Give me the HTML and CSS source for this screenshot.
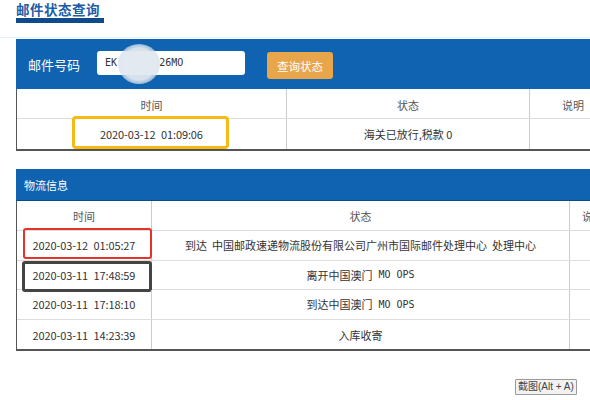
FILE: index.html
```html
<!DOCTYPE html>
<html lang="zh-CN">
<head>
<meta charset="utf-8">
<title>邮件状态查询</title>
<link rel="stylesheet" href="styles.css">
</head>
<body>
<div class="page">
  <div class="title-wrap">
    <h1 class="title">邮件状态查询</h1>
    <div class="title-bar"></div>
  </div>

  <section class="panel panel-query">
    <div class="query-bar">
      <span class="query-label">邮件号码</span>
      <div class="query-input"><span>EK</span><span class="masked">1234567</span><span>26MO</span><span class="blur"></span></div>
      <button class="query-btn" type="button">查询状态</button>
    </div>
    <div class="table t1">
      <div class="row head">
        <div class="cell">时间</div>
        <div class="cell">状态</div>
        <div class="cell">说明</div>
      </div>
      <div class="row last">
        <div class="cell mono">2020-03-12 01:09:06<span class="mark mark-yellow"></span></div>
        <div class="cell">海关已放行,税款 0</div>
        <div class="cell"></div>
      </div>
    </div>
  </section>

  <section class="panel panel-track">
    <div class="track-head">物流信息</div>
    <div class="table t2">
      <div class="row head">
        <div class="cell">时间</div>
        <div class="cell">状态</div>
        <div class="cell">说明</div>
      </div>
      <div class="row">
        <div class="cell mono">2020-03-12 01:05:27<span class="mark mark-red"></span></div>
        <div class="cell">到达&nbsp; 中国邮政速递物流股份有限公司广州市国际邮件处理中心&nbsp; 处理中心</div>
        <div class="cell"></div>
      </div>
      <div class="row">
        <div class="cell mono">2020-03-11 17:48:59<span class="mark mark-dark"></span></div>
        <div class="cell">离开中国澳门<span class="code">MO OPS</span></div>
        <div class="cell"></div>
      </div>
      <div class="row">
        <div class="cell mono">2020-03-11 17:18:10</div>
        <div class="cell">到达中国澳门<span class="code">MO OPS</span></div>
        <div class="cell"></div>
      </div>
      <div class="row last">
        <div class="cell mono">2020-03-11 14:23:39</div>
        <div class="cell">入库收寄</div>
        <div class="cell"></div>
      </div>
    </div>
  </section>

  <div class="shot-row">
    <button class="shot-btn" type="button">截图(Alt + A)</button>
  </div>
</div>
</body>
</html>
```

FILE: styles.css
```css
html, body {
  margin: 0;
  padding: 0;
  background: #fff;
  overflow: hidden;
}
body {
  font-family: "Noto Sans CJK SC", "Noto Sans", sans-serif;
  color: #333;
  width: 590px;
  height: 400px;
}
.page {
  display: flex;
  flex-direction: column;
  width: 620px;
}
.title-wrap {
  padding: 1px 0 0 16px;
  height: 38px;
  box-sizing: border-box;
  border-bottom: 1px solid #e8f3f9;
}
.title {
  margin: 0;
  font-size: 13.5px;
  line-height: 17px;
  font-weight: bold;
  color: #1d5ca6;
  letter-spacing: 0.5px;
}
.title-bar {
  width: 88px;
  height: 5px;
  background: #0e4a8c;
}
.panel {
  margin: 1px 0 0 16px;
  width: 600px;
}
.query-bar {
  height: 50px;
  background: #0f63b0;
  display: flex;
  align-items: center;
  padding-left: 12px;
}
.query-label {
  color: #fff;
  font-size: 13px;
  width: 69px;
}
.query-input {
  position: relative;
  width: 148px;
  height: 24px;
  box-sizing: border-box;
  background: #fff;
  border-radius: 3px;
  padding-left: 8px;
  font-family: "DejaVu Sans Mono", monospace;
  font-size: 10px;
  line-height: 24px;
  color: #333;
  margin-top: -2px;
}
.masked {
  color: transparent;
}
.blur {
  position: absolute;
  left: 21px;
  top: -7px;
  width: 42px;
  height: 40px;
  border-radius: 50%;
  background: radial-gradient(circle, rgba(226,232,240,0.95) 55%, rgba(200,215,232,0.6) 75%, rgba(180,200,225,0) 100%);
}
.query-btn {
  margin-left: 22px;
  margin-top: 3px;
  width: 66px;
  height: 27px;
  border: 0;
  border-radius: 3px;
  background: #e9a54a;
  color: #fff;
  font-family: "Noto Sans CJK SC", sans-serif;
  font-size: 11.5px;
  padding: 0;
}
.table {
  border-left: 1px solid #555;
  border-bottom: 2px solid #555;
  background: #fff;
}
.row {
  display: grid;
  height: 30px;
  border-bottom: 1px solid #ddd;
  box-sizing: border-box;
}
.row.last {
  border-bottom: 0;
}
.t1 .row {
  grid-template-columns: 270px 243px 1fr;
}
.t1 .row.head .cell {
  padding-top: 2px;
}
.t2 .row {
  grid-template-columns: 135px 418px 1fr;
  height: 29.6px;
}
.t2 .row.head {
  height: 30px;
}
.cell {
  position: relative;
  display: flex;
  align-items: center;
  justify-content: center;
  font-size: 11px;
  color: #333;
  border-right: 1px solid #ccc;
  white-space: nowrap;
}
.cell:last-child {
  border-right: 0;
}
.head .cell {
  color: #555;
}
.mono {
  font-family: "Noto Sans CJK SC", sans-serif;
  letter-spacing: -0.1px;
  word-spacing: 3px;
}
.code {
  font-family: "DejaVu Sans Mono", monospace;
  font-size: 10px;
  margin-left: 6px;
}
.mark {
  position: absolute;
  box-sizing: border-box;
}
.mark-yellow {
  left: 55px;
  top: -3px;
  width: 157px;
  height: 33px;
  border: 3px solid #f6b915;
  border-radius: 4px;
}
.mark-red {
  left: 6px;
  top: -3px;
  width: 129px;
  height: 31px;
  border: 2px solid #e3332a;
  border-radius: 3px;
}
.mark-dark {
  left: 5px;
  top: 0;
  width: 130px;
  height: 31px;
  border: 3px solid #444;
  border-radius: 3px;
}
.panel-track {
  margin-top: 18px;
}
.track-head {
  height: 31px;
  background: #0f63b0;
  border-bottom: 1px solid #0a4a86;
  color: #fff;
  font-size: 11px;
  display: flex;
  align-items: center;
  padding-left: 8px;
}
.shot-row {
  display: flex;
  justify-content: flex-start;
  padding: 28px 0 0 515px;
}
.shot-btn {
  height: 16px;
  padding: 0 2px;
  border: 1px solid #9a9a9a;
  background: #f2f2f2;
  color: #444;
  font-family: "Liberation Sans", "Noto Sans CJK SC", sans-serif;
  font-size: 10px;
  line-height: 14px;
  border-radius: 1px;
}
```
